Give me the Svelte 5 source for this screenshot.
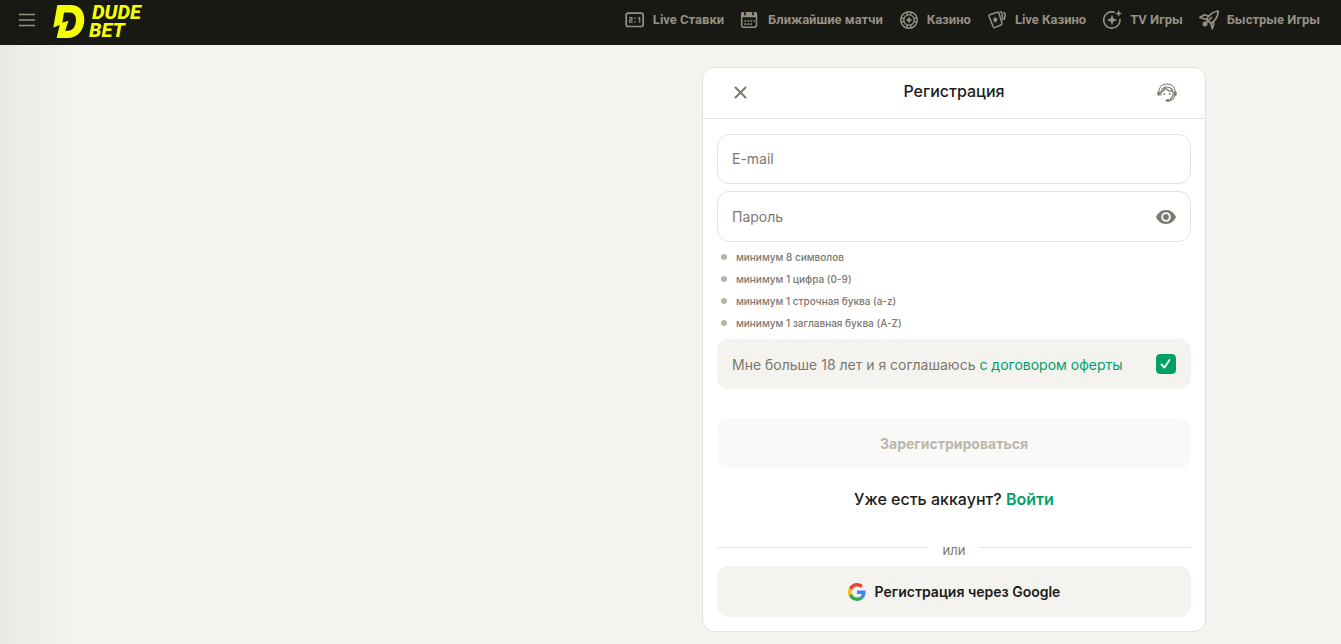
<script>
  let email = $state('');
  let password = $state('');
  let shown = $state(false);
  let agreed = $state(true);

  const nav = [
    { icon: 'score', label: 'Live Ставки' },
    { icon: 'calendar', label: 'Ближайшие матчи' },
    { icon: 'chip', label: 'Казино' },
    { icon: 'cards', label: 'Live Казино' },
    { icon: 'spark', label: 'TV Игры' },
    { icon: 'rocket', label: 'Быстрые Игры' }
  ];
  const rules = [
    'минимум 8 символов',
    'минимум 1 цифра (0-9)',
    'минимум 1 строчная буква (a-z)',
    'минимум 1 заглавная буква (A-Z)'
  ];
</script>

<header class="topbar">
  <button class="plain menu" type="button" aria-label="Меню">
    <svg width="18" height="14" viewBox="0 0 18 14" fill="none" stroke="currentColor" stroke-width="1.6" stroke-linecap="round"><path d="M1.5 1.5h15M1.5 7h15M1.5 12.500h15" /></svg>
  </button>
  <a class="logo" href="/">
    <svg width="32" height="34" viewBox="0 0 32 34" fill="#f4ff00"><path fill-rule="evenodd" d="M4.300 1H17C26.500 1 31.300 7 31.300 15.500C31.300 26 24.500 34 14.500 34H3.600L6.800 21.100L.3 23.500ZM11 8.400L9.300 18.700L15.400 16.700L12.300 26.700H15C20.500 26.700 23 21.500 23 15.500C23 11 20.500 8.400 16.500 8.400Z" /></svg>
    <span class="wordmark"><span>DUDE</span><span>BET</span></span>
  </a>
  <nav>
    {#each nav as item}
      <a href="/">
        <svg width="20" height="20" viewBox="0 0 20 20" fill="none" stroke="currentColor" stroke-width="1.5" stroke-linejoin="round" stroke-linecap="round">
          {#if item.icon === 'score'}
            <rect x="1.200" y="3.200" width="17" height="13.300" rx="2" stroke-width="1.700" />
            <path stroke-width="1.2" d="M4.500 7.700H7V9.900H4.700V12.200H7.200M13.300 8.400L14.700 7.500V12.300" />
            <path stroke-width="1.5" d="M10 8.300v.1M10 11.700v.1" />
          {:else if item.icon === 'calendar'}
            <rect x="1.700" y="2.700" width="14.800" height="14.600" rx="2" />
            <path fill="currentColor" d="M2 3h14v3.500H2z" />
            <path stroke="#181815" stroke-width="1.800" d="M5 3v1.500M13 3v1.500" />
            <path stroke-width="1.700" stroke-linecap="butt" stroke-dasharray="1.700 1.300" d="M4.500 11h10.500M4.500 14.200h7.500" />
          {:else if item.icon === 'chip'}
            <circle cx="10" cy="10" r="8.300" /><circle cx="10" cy="10" r="5.200" stroke-width="1.3" />
            <path stroke-width="1.4" d="M8 2.500l.5 2M12 2.500l-.5 2M8 17.500l.5-2M12 17.500l-.5-2M2.500 8l2 .5M2.500 12l2-.5M17.500 8l-2 .5M17.500 12l-2-.5" />
            <path fill="currentColor" stroke="none" d="M10 6.600l1.200 2.200 2.200 1.200-2.200 1.200L10 13.400l-1.200-2.200L6.600 10l2.200-1.200z" />
          {:else if item.icon === 'cards'}
            <path d="M2.800 4.700l7.700-2.400q1-.3 1.400.7l3.100 10.400q.2 1-.7 1.300l-6.500 2.900q-1 .3-1.500-.6L2 6.200q-.3-1.200.8-1.500z" />
            <path d="M13.300 1.700q1.700.2 1.700 2l.8 6M16.700 2.500q1.800.6 1.500 2.200l-.7 4.500" />
            <path fill="currentColor" stroke="none" d="M7.900 6.800l2.700 2.500-1.800 3.500-2.900-2.600z" />
          {:else if item.icon === 'spark'}
            <path stroke-width="1.700" d="M12 2.100A8.200 8.200 0 1 0 18 9.500" />
            <path fill="currentColor" stroke="none" d="M10 4.700l1.500 3.800 3.800 1.500-3.800 1.500L10 15.300l-1.500-3.800L4.700 10l3.800-1.500zM16.700 0l.9 2.600 2.400.9-2.400.9-.9 2.600-.9-2.600-2.500-.9 2.500-.9z" />
          {:else}
            <path stroke-width="1.700" d="M7.500 9.500C10 5 14 1.700 19.200 1c-.2 5.500-2.700 9.500-7.200 12.500M9.200 6L5.500 4.800.8 7.500l6.700 2L12 13.500l1.200 5.200 1.600-4.700-.4-3M7.500 12.500L12.500 7.700" />
            <circle cx="6" cy="14" r="2.500" fill="currentColor" stroke="none" />
          {/if}
        </svg>
        {item.label}
      </a>
    {/each}
  </nav>
</header>

<main>
  <form class="card" onsubmit={(e) => e.preventDefault()}>
    <div class="card-head">
      <button class="plain" type="button" aria-label="Закрыть">
        <svg width="20" height="20" viewBox="0 0 20 20" fill="none" stroke="currentColor" stroke-width="2" stroke-linecap="round"><path d="M4.500 4.500l10 10M14.500 4.500l-10 10" /></svg>
      </button>
      <h1>Регистрация</h1>
      <button class="plain" type="button" aria-label="Поддержка">
        <svg width="20" height="20" viewBox="0 0 20 20" fill="none" stroke="currentColor" stroke-linecap="round">
          <path stroke-width="1.200" d="M1.700 9C2 4 5.500 1 10 1s8 3 8.300 8M17.900 12c-.5 3.300-2.500 5.300-5.600 5.600" />
          <path stroke-width="2.700" d="M1.600 9.800v1.700M18.400 9.800v1.700M10 17.500h1.500" />
          <path stroke-width="1.200" d="M3.900 12C3.500 7 6 4 10 4s6.400 3 6.200 7c-.2 2.500-1.300 4-3.200 5" />
          <path stroke-width="1.300" d="M4.300 9.200C6.300 8.300 7.600 7 8.300 4.800c1.500 2.200 3.700 3.400 7.200 3.500" />
          <path stroke-width="1.800" d="M7.300 11v.1M12.700 11v.1" />
        </svg>
      </button>
    </div>

    <div class="body">
      <div class="field">
        <input type="email" aria-label="E-mail" placeholder="E-mail" bind:value={email} />
      </div>
      <div class="field password">
        <input type={shown ? 'text' : 'password'} aria-label="Пароль" placeholder="Пароль" bind:value={password} />
        <button class="plain" type="button" aria-label="Показать пароль" onclick={() => (shown = !shown)}>
          <svg width="20" height="14" viewBox="0 0 20 14"><path fill="currentColor" fill-rule="evenodd" d="M10 0C5.500 0 1.700 2.800 0 7c1.700 4.200 5.500 7 10 7s8.300-2.800 10-7c-1.700-4.200-5.500-7-10-7zm0 2.200a4.800 4.800 0 1 1 0 9.600 4.800 4.800 0 0 1 0-9.600z" /><circle cx="10" cy="7" r="2.900" fill="currentColor" /></svg>
        </button>
      </div>

      <ul>
        {#each rules as rule}<li>{rule}</li>{/each}
      </ul>

      <div class="agree">
        <label for="agree">Мне больше 18 лет и я соглашаюсь <a href="/">с договором оферты</a></label>
        <span class="tick">
          <input id="agree" type="checkbox" bind:checked={agreed} />
          {#if agreed}
            <svg viewBox="0 0 19 20" fill="none" stroke="#fff" stroke-width="1.800" stroke-linecap="round" stroke-linejoin="round"><path d="M5 10.500l3 3 5-7.500" /></svg>
          {/if}
        </span>
      </div>

      <button class="wide submit" type="submit" disabled>Зарегистрироваться</button>
      <p class="login">Уже есть аккаунт? <a href="/">Войти</a></p>
      <div class="or"><span>или</span></div>
      <button class="wide google" type="button">
        <svg width="18" height="18" viewBox="0 0 48 48"><path fill="#ea4335" d="M24 9.500c3.540 0 6.710 1.220 9.210 3.600l6.850-6.850C35.900 2.380 30.470 0 24 0 14.620 0 6.510 5.380 2.560 13.220l7.980 6.190C12.430 13.720 17.740 9.500 24 9.500z" /><path fill="#4285f4" d="M46.980 24.550c0-1.570-.15-3.090-.38-4.550H24v9.020h12.940c-.58 2.960-2.260 5.480-4.780 7.180l7.730 6c4.510-4.180 7.090-10.360 7.090-17.650z" /><path fill="#fbbc05" d="M10.530 28.590c-.48-1.450-.76-2.990-.76-4.590s.27-3.140.76-4.590l-7.980-6.190C.92 16.460 0 20.120 0 24s.92 7.540 2.560 10.780l7.970-6.190z" /><path fill="#34a853" d="M24 48c6.480 0 11.930-2.130 15.890-5.810l-7.730-6c-2.150 1.450-4.920 2.300-8.160 2.300-6.260 0-11.570-4.220-13.470-9.910l-7.980 6.190C6.510 42.620 14.620 48 24 48z" /></svg>
        Регистрация через Google
      </button>
    </div>
  </form>
</main>

<style>
  :global(body) {
    margin: 0;
    background: linear-gradient(90deg, #e8e8e5 0, #efeeeb 32px, #f4f3ef 80px);
    min-height: 100vh;
    font-family: Inter, "Liberation Sans", sans-serif;
    color: #1c1c1a;
  }
  * { box-sizing: border-box; }
  svg { display: block; flex: none; }
  a { color: #00a067; text-decoration: none; }
  button, input { font: inherit; }
  .plain {
    display: grid;
    place-items: center;
    padding: 0;
    border: 0;
    background: none;
    color: #7d776d;
    cursor: pointer;
  }
  .topbar {
    display: flex;
    align-items: center;
    height: 45px;
    padding: 0 21px 6px 18px;
    background: #181815;
  }
  .menu { color: #969082; }
  .logo {
    display: flex;
    align-items: center;
    gap: 4px;
    margin: 3px 0 0 17px;
    color: #f4ff00;
  }
  .wordmark {
    display: flex;
    flex-direction: column;
    font: italic 800 20px/18px Roboto, "Liberation Sans", sans-serif;
  }
  .wordmark :first-child { padding-left: 3px; }
  nav { display: flex; gap: 16px; margin-left: auto; }
  nav a {
    display: flex;
    align-items: center;
    gap: 8px;
    color: #969082;
    font-size: 13px;
    font-family: Roboto, Inter, sans-serif;
    font-weight: 700;
    line-height: 20px;
    white-space: nowrap;
  }
  main { max-width: 1071px; margin: 0 auto; padding: 22px 0 12px; }
  .card {
    max-width: 504px;
    margin-left: auto;
    border: 1px solid #e3e2de;
    border-radius: 12px;
    background: #fff;
  }
  .card-head {
    display: flex;
    align-items: center;
    justify-content: space-between;
    height: 51px;
    padding: 0 28px;
    border-bottom: 1px solid #e3e2de;
  }
  h1 { margin: 0; padding-bottom: 4px; font-size: 16px; font-weight: 500; line-height: 24px; }
  .body { padding: 15px 14px 14px; }
  .field {
    display: flex;
    align-items: center;
    height: 50px;
    margin-bottom: 7px;
    padding: 0 14px 1px;
    border: 1px solid #e3e2de;
    border-radius: 12px;
  }
  .password { height: 51px; padding-bottom: 0; }
  .field input {
    flex: 1;
    min-width: 0;
    padding: 0;
    border: 0;
    outline: 0;
    background: none;
    color: #1c1c1a;
    font-size: 14px;
  }
  .field input::placeholder { color: #7d776d; opacity: 1; }
  ul { margin: -3px 0 0; padding: 0 4px; list-style: none; }
  li {
    display: flex;
    align-items: center;
    gap: 9px;
    color: #7d776d;
    font-size: 10px;
    font-weight: 500;
    line-height: 22px;
  }
  li::before {
    width: 6px;
    height: 6px;
    border-radius: 50%;
    background: #b9b4a8;
    content: "";
  }
  .agree {
    display: flex;
    align-items: center;
    justify-content: space-between;
    min-height: 50px;
    margin: 5px 0 29px;
    padding: 0 15px;
    border-radius: 12px;
    background: #f4f3ef;
    color: #7d776d;
    font-size: 14px;
  }
  .tick { display: grid; width: 20px; height: 20px; }
  .tick input, .tick svg { grid-area: 1 / 1; width: 20px; height: 20px; }
  .tick input {
    margin: 0;
    border: 1px solid #b9b4a8;
    border-radius: 4px;
    appearance: none;
  }
  .tick input:checked { border-color: #00a067; background: #00a067; }
  .tick svg { pointer-events: none; }
  .wide {
    display: flex;
    align-items: center;
    justify-content: center;
    gap: 9px;
    width: 100%;
    height: 50px;
    border: 0;
    border-radius: 12px;
    background: #f4f3ef;
    color: #1c1c1a;
    font-size: 14px;
    font-weight: 600;
  }
  .submit { background: #faf9f7; color: #bcb7ab; font-weight: 700; }
  .google { height: 51px; }
  .login {
    margin: 19px 0 32px;
    font-size: 16px;
    font-weight: 500;
    line-height: 24px;
    text-align: center;
  }
  .login a { font-weight: 600; }
  .or {
    display: flex;
    align-items: flex-start;
    gap: 15px;
    margin-bottom: 8px;
    color: #7d776d;
    font-size: 13px;
    line-height: 15px;
  }
  .or::before, .or::after { flex: 1; height: 1px; margin-top: 4px; background: #e3e2de; content: ""; }
</style>
